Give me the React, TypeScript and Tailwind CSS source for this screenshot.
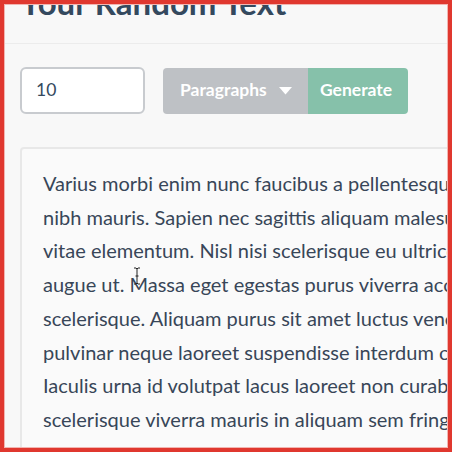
import React from "react";

const lines = [
  "Varius morbi enim nunc faucibus a pellentesque sit amet porttitor",
  "nibh mauris. Sapien nec sagittis aliquam malesuada bibendum arcu",
  "vitae elementum. Nisl nisi scelerisque eu ultrices vitae auctor eu",
  "augue ut. Massa eget egestas purus viverra accumsan in nisl nisi",
  "scelerisque. Aliquam purus sit amet luctus venenatis lectus magna",
  "pulvinar neque laoreet suspendisse interdum consectetur libero id",
  "Iaculis urna id volutpat lacus laoreet non curabitur gravida arcu",
  "scelerisque viverra mauris in aliquam sem fringilla ut morbi",
];

export default function App() {
  return (
    <div
      className="relative w-[452px] h-[452px] overflow-hidden bg-[#f8f8f8]"
      style={{ fontFamily: "Lato, 'Open Sans', sans-serif" }}
    >
      <div className="w-[760px]">
        <div className="h-[44px] border-b border-[#ececec] px-[20px] overflow-hidden">
          <h1 className="-mt-[18px] text-[33px] leading-[40px] font-bold text-[#34495e] whitespace-nowrap">
            Your Random Text
          </h1>
        </div>
        <div className="flex items-center px-[20px] pt-[23px]">
          <div className="w-[125px] h-[47px] border-2 border-[#c8cbcf] rounded-[6px] bg-white flex items-center pl-[14px] text-[17.5px] text-[#34495e]">
            10
          </div>
          <div className="ml-[18px] flex h-[46px] rounded-[4px] overflow-hidden">
            <div className="w-[145px] bg-[#bec1c5] flex items-center pl-[17px] text-white font-bold text-[17.5px]">
              Paragraphs
              <svg width="13" height="8" viewBox="0 0 13 8" className="ml-[12px]">
                <path d="M0 0 L13 0 L6.5 7.5 Z" fill="#ffffff" />
              </svg>
            </div>
            <div className="w-[100px] bg-[#86c1aa] flex items-center pl-[12px] text-white font-bold text-[17.5px]">
              Generate
            </div>
          </div>
        </div>
        <div className="mx-[20px] mt-[33px] border-2 border-[#e8e8e8] rounded-[4px] bg-[#fafafa] pl-[21px] pt-[18px] pb-[20px] text-[20px] leading-[33.7px] text-[#384658]">
          {lines.map((l, i) => (
            <div key={i} className="whitespace-nowrap">
              {l}
            </div>
          ))}
        </div>
      </div>
      <svg
        width="8"
        height="18"
        viewBox="0 0 8 18"
        className="absolute left-[133px] top-[267px]"
      >
        <path
          d="M1 1 H3 L4 2 L5 1 H7 M4 2 V16 M1 17 H3 L4 16 L5 17 H7 M2.5 9 H5.5"
          stroke="#222"
          strokeWidth="1"
          fill="none"
        />
      </svg>
      <div className="absolute inset-0 border-[4px] border-[#e0382f] pointer-events-none shadow-[inset_0_0_0_1px_#f2b5b1]" />
    </div>
  );
}
